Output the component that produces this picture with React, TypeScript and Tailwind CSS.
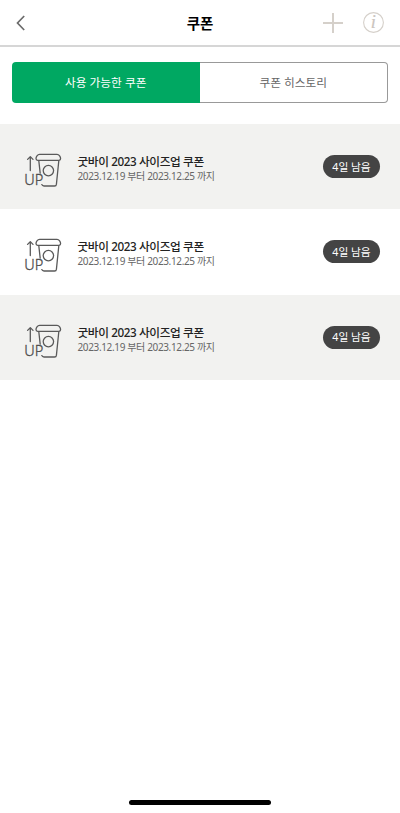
const coupons = [
  { id: 1, title: '굿바이 2023 사이즈업 쿠폰', period: '2023.12.19 부터 2023.12.25 까지', left: '4일 남음' },
  { id: 2, title: '굿바이 2023 사이즈업 쿠폰', period: '2023.12.19 부터 2023.12.25 까지', left: '4일 남음' },
  { id: 3, title: '굿바이 2023 사이즈업 쿠폰', period: '2023.12.19 부터 2023.12.25 까지', left: '4일 남음' },
];

function SizeUpIcon() {
  return (
    <svg width="38" height="36" viewBox="0 0 38 36" fill="none" stroke="#5a5a5a" strokeWidth="1.3" strokeLinecap="round" strokeLinejoin="round" className="overflow-visible">
      <path d="M6.3 18.6V5.4M3.6 7.4L6.3 4.6L9 7.4" />
      <path d="M15.6 2.4H33C35.2 2.4 36.6 5 36.6 6.6C36.6 7.8 36 8.3 35 8.3H13.6C12.6 8.3 12 7.8 12 6.6C12 5 13.4 2.4 15.6 2.4Z" />
      <path d="M14.8 8.8L16.2 21.2M34.8 8.8L32.4 32.4Q32.2 34 30.6 34H20Q18.4 34 17.8 32.6" />
      <circle cx="24.4" cy="18.6" r="5.2" />
      <text x="0.3" y="33" fontSize="15" textLength="19" lengthAdjust="spacingAndGlyphs" fill="#4c4c4c" stroke="#4c4c4c" strokeWidth="0.3" className="font-['Noto_Sans'] font-light">
        UP
      </text>
    </svg>
  );
}

function Header() {
  return (
    <header className="grid h-[47px] grid-cols-[1fr_auto_1fr] items-center border-b-2 border-[#d6d6d6] pl-4 pr-4">
      <button type="button" aria-label="뒤로">
        <svg width="10" height="16" viewBox="0 0 10 16" fill="none" stroke="#6b6b6b" strokeWidth="1.7">
          <path d="M8.2 1L1.5 8L8.2 15" />
        </svg>
      </button>
      <h1 className="pt-px text-[14.5px] font-bold leading-none text-black">쿠폰</h1>
      <div className="flex items-center justify-end gap-5">
        <svg width="20" height="20" viewBox="0 0 20 20" stroke="#d5d0ca" strokeWidth="2">
          <path d="M0 10H20M10 0V20" />
        </svg>
        <svg width="21" height="21" viewBox="0 0 21 21" fill="none">
          <circle cx="10.5" cy="10.5" r="9.9" stroke="#d5d0ca" strokeWidth="1.1" />
          <text x="10.3" y="16.4" textAnchor="middle" fontSize="18.5" fill="#cbc5be" stroke="#cbc5be" strokeWidth="0.2" className="font-['Liberation_Serif',serif] italic">
            i
          </text>
        </svg>
      </div>
    </header>
  );
}

export default function App() {
  return (
    <div className="flex h-[813px] w-full flex-col bg-white font-['Noto_Sans','Noto_Sans_CJK_KR',sans-serif]">
      <Header />
      <div className="mx-3 mt-[15px] flex h-[41px] shrink-0 text-[11.7px]">
        <button type="button" className="flex-1 rounded-l bg-[#00a862] text-white">
          사용 가능한 쿠폰
        </button>
        <button type="button" className="flex-1 rounded-r border border-l-0 border-[#999] text-[#666]">
          쿠폰 히스토리
        </button>
      </div>
      <ul className="mt-[21px]">
        {coupons.map((coupon) => (
          <li key={coupon.id} className="flex h-[85.33px] items-center pl-6 pr-5 odd:bg-[#f2f2f0]">
            <div className="mt-[7px]">
              <SizeUpIcon />
            </div>
            <div className="ml-[15.5px] mt-1 flex-1">
              <p className="text-[11.7px] font-medium leading-[15px] tracking-[-0.4px] text-[#222]">{coupon.title}</p>
              <p className="text-[10px] leading-[14px] tracking-[-0.36px] text-[#666]">{coupon.period}</p>
            </div>
            <span className="flex h-[23px] w-[57px] items-center justify-center rounded-full bg-[#444] text-[10.7px] text-white">
              {coupon.left}
            </span>
          </li>
        ))}
      </ul>
      <div className="mx-auto mb-2 mt-auto h-[5px] w-[142px] rounded-full bg-black" />
    </div>
  );
}
